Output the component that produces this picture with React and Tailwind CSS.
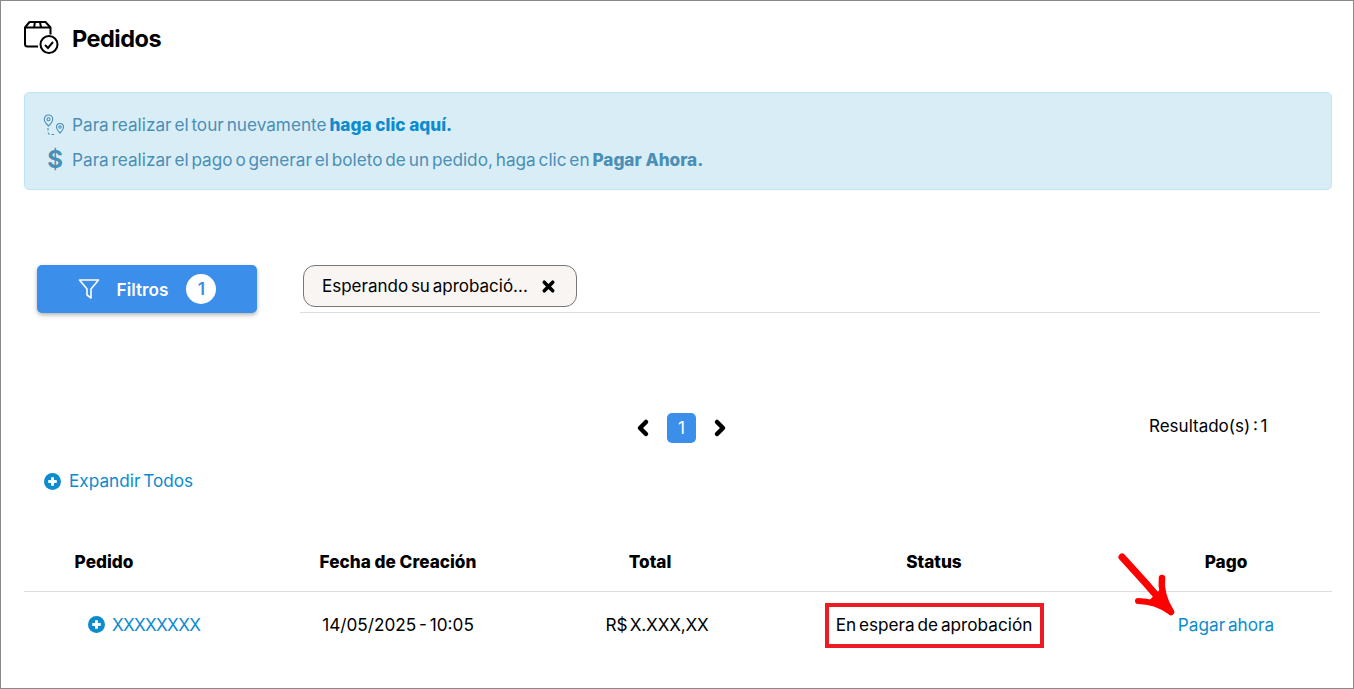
import { X, ChevronLeft, ChevronRight } from 'lucide-react';

const COLS = 'grid-cols-[160px_428px_76px_492px_92px]';

function PlusCircle({ className }) {
  return (
    <svg viewBox="0 0 18 18" className={className}>
      <circle cx="9" cy="9" r="9" fill="#0d8bcf" />
      <path d="M9 4.500v9M4.500 9h9" stroke="#fff" strokeWidth="3" />
    </svg>
  );
}

function BoxCheck() {
  return (
    <svg viewBox="0 0 36 36" className="w-[36px] h-[36px]" fill="none" stroke="#000" strokeWidth="2">
      <path d="M15 25.500H4.500Q2 25.500 2 23V6.500L6.500 1h16l5 5.500v7" strokeLinejoin="round" />
      <path d="M2 6.500h25.500M12 1l-1 5.500M17 1l1 5.500" />
      <circle cx="26" cy="23.500" r="8.500" />
      <path d="M22 24l3 3 5-6" />
    </svg>
  );
}

function RouteIcon() {
  return (
    <svg viewBox="0 0 22 22" className="w-[22px] h-[22px]" fill="none" stroke="#4a8fb5" strokeWidth="1.100">
      <path d="M5.500 1a4.200 4.200 0 0 1 4.200 4.200C9.700 8 5.500 12 5.500 12S1.300 8 1.300 5.200A4.200 4.200 0 0 1 5.500 1z" />
      <circle cx="5.500" cy="5.200" r="1.500" />
      <path d="M17 9.500a3.500 3.500 0 0 1 3.500 3.500c0 2.300-3.500 6-3.500 6s-3.500-3.700-3.500-6A3.500 3.500 0 0 1 17 9.500z" />
      <circle cx="17" cy="13" r="1.200" />
      <path d="M5 14v3.500q0 3 2.500 3H13" strokeDasharray="2.500 2" />
    </svg>
  );
}

export default function App() {
  return (
    <div
      className="relative h-[689px] w-[1354px] overflow-hidden border border-[#8a8a8a] bg-white text-[17.2px] text-black [word-spacing:-2px]"
      style={{ fontFamily: 'Inter, "Liberation Sans", sans-serif' }}
    >
      <div className="flex items-center gap-[13px] pl-[22px] pt-[17px] h-[58px]">
        <BoxCheck />
        <h1 className="text-[23.500px] font-bold tracking-[-0.5px]">Pedidos</h1>
      </div>

      <div className="ml-[23px] mr-[21px] mt-[33px] h-[98px] rounded-[5px] border border-[#bde6f1] bg-[#d9edf7] pl-[18px] pt-[18px] text-[#4a8fb5]">
        <div className="flex items-center h-[28px]">
          <RouteIcon />
          <span className="ml-[7px]">Para realizar el tour nuevamente <b className="font-extrabold text-[#0d8bcf] [word-spacing:0]">haga clic aquí.</b></span>
        </div>
        <div className="flex items-center h-[28px] mt-[7px]">
          <span className="w-[22px] pl-[2px] text-center text-[24px] font-bold leading-none">$</span>
          <span className="ml-[7px]">Para realizar el pago o generar el boleto de un pedido, haga clic en <b className="font-extrabold [word-spacing:0]">Pagar Ahora.</b></span>
        </div>
      </div>

      <div className="flex mt-[75px] pl-[36px]">
        <button className="flex h-[48px] w-[220px] items-center justify-center rounded-[5px] bg-[#3b8eea] font-semibold text-white shadow-[0_2px_4px_rgba(0,0,0,0.3)]">
          <svg viewBox="0 0 22 22" className="w-[22px] h-[22px]" fill="none" stroke="#fff" strokeWidth="1.600" strokeLinejoin="round">
            <path d="M1.500 2h19l-7.500 9v9l-4-3v-6z" />
          </svg>
          <span className="ml-[17px] pt-[1px]">Filtros</span>
          <span className="ml-[18px] flex h-[30px] w-[30px] items-center justify-center rounded-full bg-white text-[#3b8eea]">1</span>
        </button>
        <div className="ml-[43px] h-[48px] w-[1020px] border-b border-[#dddddd]">
          <div className="ml-[3px] flex h-[42px] w-[274px] items-center rounded-[12px] border border-[#777] bg-[#f8f5f2] pl-[18px] text-[17px]">
            <span className="pt-[2px]">Esperando su aprobació...</span>
            <X className="ml-[12px] w-[17px] h-[17px]" strokeWidth={5} />
          </div>
        </div>
      </div>

      <div className="flex items-center mt-[99px] h-[32px]">
        <div className="ml-[630px] flex items-center">
          <ChevronLeft className="w-[24px] h-[24px]" strokeWidth={4.500} />
          <span className="ml-[12px] flex h-[30px] w-[29px] items-center justify-center rounded-[5px] bg-[#3b8eea] text-white">1</span>
          <ChevronRight className="ml-[12px] w-[24px] h-[24px]" strokeWidth={4.500} />
        </div>
        <span className="ml-[417px] -mt-[2px] text-[17px]">Resultado(s) : 1</span>
      </div>

      <div className="flex items-center mt-[23px] ml-[43px] h-[28px] text-[#0d8bcf]">
        <PlusCircle className="w-[17px] h-[17px]" />
        <span className="ml-[8px]">Expandir Todos</span>
      </div>

      <div className="ml-[23px] mr-[21px] mt-[52px]">
        <div className={`grid h-[45px] ${COLS} items-start border-b border-[#dddddd] pt-[2px] font-extrabold [word-spacing:0]`}>
          <div className="flex justify-center whitespace-nowrap">Pedido</div>
          <div className="flex justify-center whitespace-nowrap">Fecha de Creación</div>
          <div className="flex justify-center whitespace-nowrap">Total</div>
          <div className="flex justify-center whitespace-nowrap">Status</div>
          <div className="flex justify-center whitespace-nowrap">Pago</div>
        </div>
        <div className={`grid h-[66px] ${COLS} items-center`}>
          <div className="flex items-center whitespace-nowrap pl-[64px] text-[#0d8bcf]">
            <PlusCircle className="w-[17px] h-[17px] shrink-0" />
            <span className="ml-[7px] tracking-[-0.7px]">XXXXXXXX</span>
          </div>
          <div className="flex justify-center whitespace-nowrap">14/05/2025 - 10:05</div>
          <div className="flex justify-center whitespace-nowrap pl-[14px] tracking-[-0.2px]">R$ X.XXX,XX</div>
          <div className="flex justify-center">
            <span className="flex h-[45px] w-[219px] items-center justify-center border-[4px] border-[#ed1c24]">En espera de aprobación</span>
          </div>
          <div className="flex justify-center whitespace-nowrap text-[#0d8bcf]">Pagar ahora</div>
        </div>
      </div>

      <svg viewBox="0 0 62 68" className="absolute left-[1116px] top-[551px] w-[62px] h-[68px]" fill="none" stroke="#ff0000" strokeLinecap="round" strokeLinejoin="round">
        <path d="M5 5Q30 32 52 58" strokeWidth="7" />
        <path d="M45 26Q43 42 54 60" strokeWidth="6.500" />
        <path d="M21 49Q38 49 54 60" strokeWidth="6" />
        <path d="M44 38L54 60L32 50Z" fill="#ff0000" strokeWidth="2" />
      </svg>
    </div>
  );
}
